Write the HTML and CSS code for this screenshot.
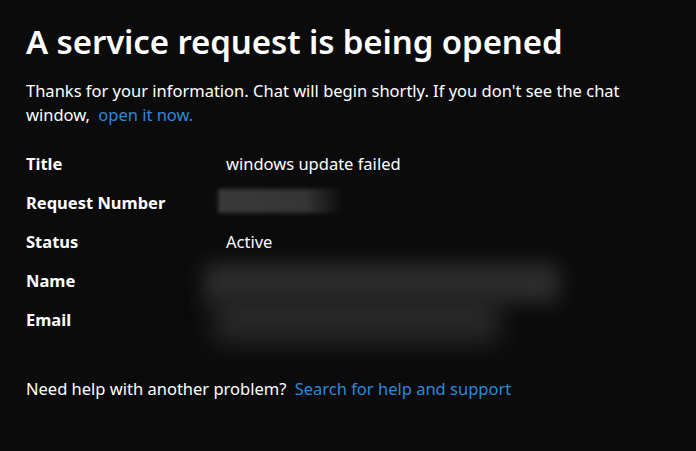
FILE: index.html
```html
<!DOCTYPE html>
<html lang="en">
<head>
<meta charset="utf-8">
<link rel="stylesheet" href="styles.css">
</head>
<body>
<main class="page">
  <h1 class="title">A service request is being opened</h1>
  <p class="intro">Thanks for your information. Chat will begin shortly. If you don't see the chat window, <a class="link" href="#">open it now.</a></p>
  <div class="details">
    <div class="label">Title</div><div class="value">windows update failed</div>
    <div class="label">Request Number</div><div class="value"><span class="blur blur-num"></span></div>
    <div class="label">Status</div><div class="value">Active</div>
    <div class="label">Name</div><div class="value"><span class="blur blur-name"></span></div>
    <div class="label">Email</div><div class="value"><span class="blur blur-email"></span></div>
  </div>
  <p class="help">Need help with another problem? <a class="link" href="#">Search for help and support</a></p>
</main>
</body>
</html>
```
FILE: styles.css
```css
html, body {
  margin: 0;
  padding: 0;
  background: #0b0b0c;
  color: #ffffff;
  font-family: "Noto Sans", "Open Sans", sans-serif;
}
.page {
  padding: 21px 26px;
}
.title {
  margin: 0;
  font-size: 33px;
  font-weight: 600;
  letter-spacing: -0.1px;
  line-height: 42px;
}
.intro {
  margin: 16px 0 0;
  font-size: 16.5px;
  line-height: 24px;
  max-width: 650px;
}
.link {
  color: #2a8ad9;
  text-decoration: none;
  margin-left: 4px;
}
.details {
  margin-top: 17px;
  display: grid;
  grid-template-columns: 200px 1fr;
  grid-auto-rows: 39px;
  align-items: center;
  font-size: 16.5px;
}
.label {
  font-weight: 700;
}
.value {
  position: relative;
  min-height: 22px;
}
.blur {
  position: absolute;
  display: block;
}
.blur-num {
  left: -8px;
  top: -3px;
  width: 126px;
  height: 24px;
  background: linear-gradient(90deg, #3a3a3a 0%, #353535 70%, rgba(40,40,40,0) 100%);
  filter: blur(2px);
}
.blur-name {
  left: -22px;
  top: -6px;
  width: 355px;
  height: 38px;
  background: #2e2e2e;
  filter: blur(10px);
}
.blur-email {
  left: -12px;
  top: -14px;
  width: 285px;
  height: 48px;
  background: #282828;
  filter: blur(12px);
}
.help {
  margin: 38px 0 0;
  font-size: 16.5px;
}
```
